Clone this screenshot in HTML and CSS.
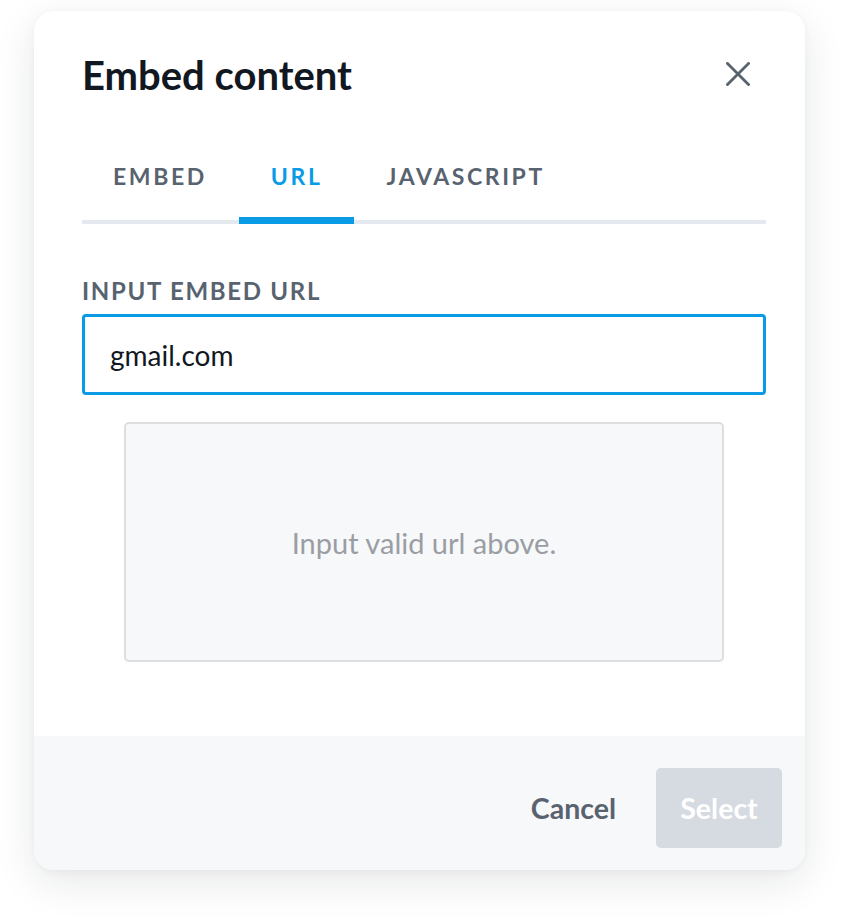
FILE: index.html
```html
<!DOCTYPE html>
<html lang="en">
<head>
<meta charset="utf-8">
<title>Embed content</title>
<link rel="stylesheet" href="styles.css">
</head>
<body>
<div class="dialog">
  <div class="body">
    <div class="header">
      <h1 class="title">Embed content</h1>
      <button class="close" aria-label="Close">
        <svg width="24" height="24" viewBox="0 0 24 24"><path d="M1.5 1.5L22.5 22.5M22.5 1.5L1.5 22.5" stroke="#58636e" stroke-width="2.8" stroke-linecap="square" fill="none"/></svg>
      </button>
    </div>
    <div class="tabs">
      <div class="tab">EMBED</div>
      <div class="tab active">URL</div>
      <div class="tab">JAVASCRIPT</div>
    </div>
    <label class="label" for="url">INPUT EMBED URL</label>
    <div class="input">gmail.com</div>
    <div class="preview">Input valid url above.</div>
  </div>
  <div class="footer">
    <button class="btn-cancel">Cancel</button>
    <button class="btn-select">Select</button>
  </div>
</div>
</body>
</html>
```
FILE: styles.css
```css
* { box-sizing: border-box; }
html, body { margin: 0; padding: 0; background: #ffffff; }
body {
  font-family: Lato, "Open Sans", "Liberation Sans", sans-serif;
  width: 841px;
  height: 917px;
  overflow: hidden;
}
.dialog {
  margin: 11px 0 0 34px;
  width: 771px;
  height: 859px;
  background: #ffffff;
  border-radius: 20px;
  box-shadow: 0 12px 40px rgba(20, 30, 40, 0.10), 0 2px 8px rgba(20, 30, 40, 0.04);
  display: flex;
  flex-direction: column;
  overflow: hidden;
}
.body {
  flex: 1;
  padding: 0 39px 0 48px;
  display: flex;
  flex-direction: column;
}
.header {
  display: flex;
  align-items: flex-start;
  justify-content: space-between;
  height: 136px;
  padding-top: 40px;
}
.title {
  margin: 0;
  font-size: 40px;
  font-weight: 700;
  color: #121821;
  line-height: 48px;
}
.close {
  border: none;
  background: none;
  padding: 0;
  margin: 11px 16px 0 0;
  width: 24px;
  height: 24px;
  display: flex;
}
.tabs {
  display: flex;
  width: 684px;
  border-bottom: 4px solid #e4e9f0;
  height: 77px;
}
.tab {
  padding: 15px 32px 0;
  font-size: 23px;
  font-weight: 700;
  letter-spacing: 2.6px;
  color: #58636f;
  line-height: 28px;
  position: relative;
}
.tab:first-child { padding-left: 31px; }
.tab.active {
  color: #0a9be6;
}
.tab.active::after {
  content: "";
  position: absolute;
  left: 0;
  right: 0;
  bottom: -4px;
  height: 7px;
  background: #0a9be6;
}
.label {
  margin-top: 53px;
  font-size: 24px;
  font-weight: 700;
  letter-spacing: 1.7px;
  color: #58636f;
  line-height: 28px;
  display: block;
}
.input {
  margin-top: 9px;
  width: 684px;
  height: 81px;
  border: 3px solid #0a9be6;
  border-radius: 4px;
  padding: 0 25px;
  display: flex;
  align-items: center;
  font-size: 28px;
  color: #121821;
}
.preview {
  margin: 27px 0 0 42px;
  width: 600px;
  height: 240px;
  border: 2px solid #dcdee0;
  border-radius: 5px;
  background: #f7f8fa;
  display: flex;
  align-items: center;
  justify-content: center;
  font-size: 29px;
  color: #9a9ea4;
}
.footer {
  height: 134px;
  background: #f7f8fa;
  display: flex;
  align-items: center;
  justify-content: flex-end;
  padding: 10px 23px 0 0;
  gap: 40px;
}
.btn-cancel {
  border: none;
  background: none;
  padding: 0;
  font-family: inherit;
  font-size: 28.5px;
  font-weight: 700;
  color: #58636f;
}
.btn-select {
  border: none;
  width: 126px;
  height: 80px;
  border-radius: 5px;
  background: #d5dbe1;
  color: #ffffff;
  font-family: inherit;
  font-size: 28.5px;
  font-weight: 700;
}
```
